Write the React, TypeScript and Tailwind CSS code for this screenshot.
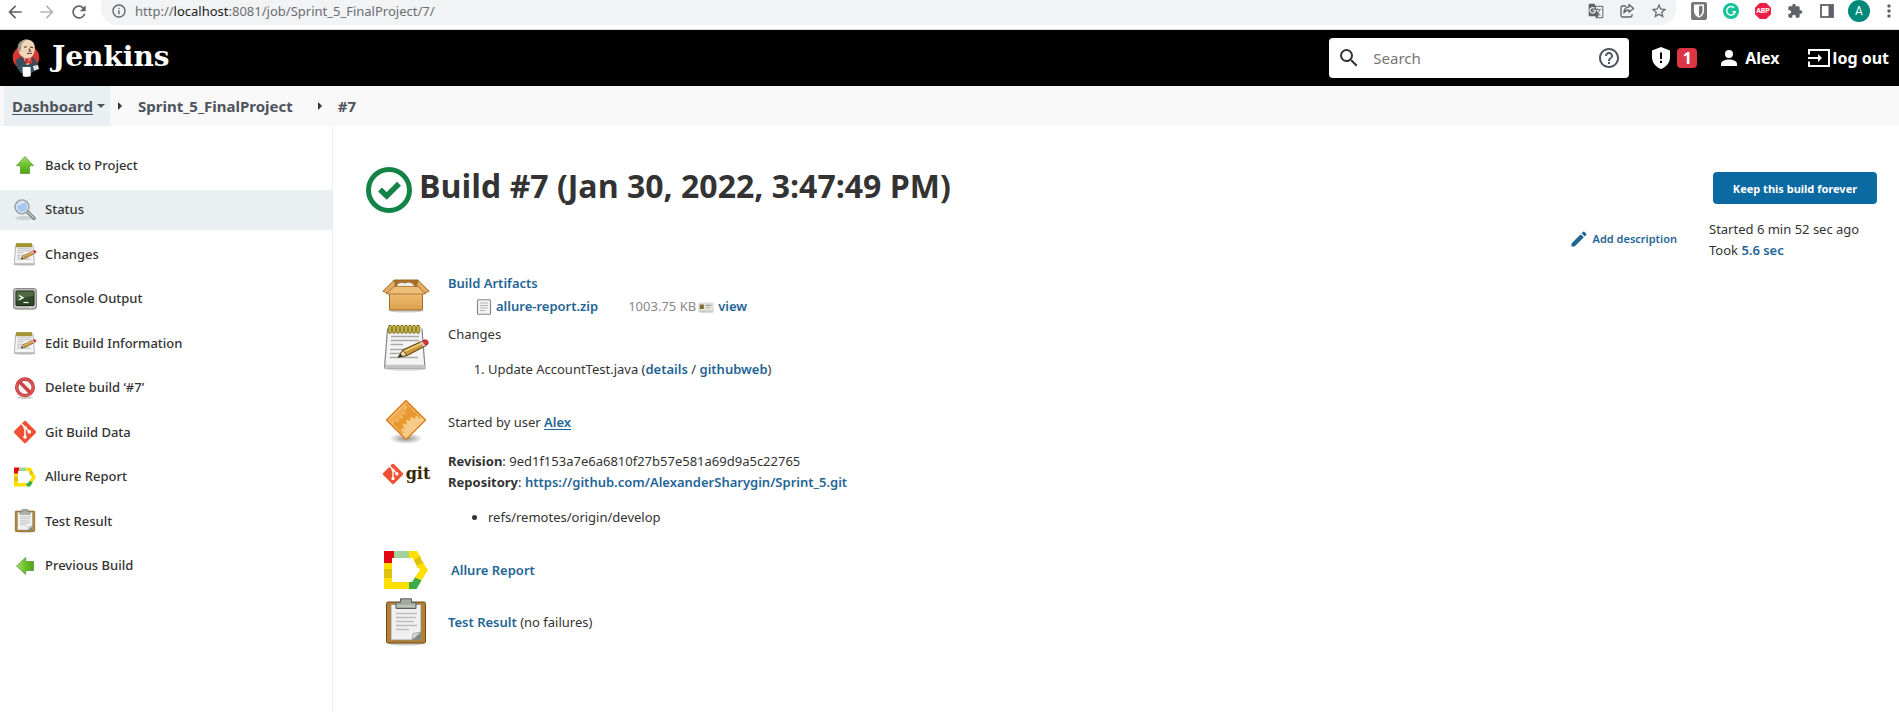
import type { ReactNode } from "react";
import {
  MdArrowBack,
  MdArrowForward,
  MdRefresh,
  MdInfoOutline,
  MdStarBorder,
  MdExtension,
  MdMoreVert,
  MdSearch,
  MdHelpOutline,
  MdEdit,
  MdGTranslate,
} from "react-icons/md";

type IconProps = { className?: string };

/* ---------- browser toolbar icons ---------- */

function ShareIcon() {
  return (
    <svg viewBox="0 0 16 16" className="size-4" fill="none" stroke="#5f6368" strokeWidth="1.3" strokeLinejoin="round" aria-hidden>
      <path d="M7 3H3.400C2.500 3 2 3.500 2 4.400V12.600C2 13.500 2.500 14 3.400 14H11.600C12.500 14 13 13.500 13 12.600V11" />
      <path d="M10 1.500 14.600 5.400 10 9.300V7C7.500 7 6 8 4.800 10 5 6.500 7 4.200 10 3.900Z" />
    </svg>
  );
}

function ShieldBoxIcon() {
  return (
    <svg viewBox="0 0 16 18" className="h-[18px] w-4" aria-hidden>
      <rect width="16" height="18" rx="2" fill="#777" />
      <path d="M3 2.500H13V9C13 12.500 10.500 14.500 8 15.800 5.500 14.500 3 12.500 3 9Z" fill="#fff" />
      <path d="M8 4H11.500V9C11.500 11.500 10 13 8 14.200Z" fill="#777" />
    </svg>
  );
}

function GrammarIcon() {
  return (
    <svg viewBox="0 0 16 16" className="size-4" fill="none" aria-hidden>
      <circle cx="8" cy="8" r="8" fill="#15c39a" />
      <path d="M11 4.700A4.300 4.300 0 1 0 12.200 8.800H9.500M12.200 8.500 10.700 11" stroke="#fff" strokeWidth="1.400" />
    </svg>
  );
}

function AbpIcon() {
  return (
    <span className="flex size-4 items-center justify-center bg-[#ed1e45] font-['Roboto',sans-serif] text-[7px] font-bold text-white [clip-path:polygon(30%_0,70%_0,100%_30%,100%_70%,70%_100%,30%_100%,0_70%,0_30%)]">
      ABP
    </span>
  );
}

function PanelIcon() {
  return (
    <svg viewBox="0 0 14 14" className="size-3.5" aria-hidden>
      <rect x="1" y="1" width="12" height="12" fill="none" stroke="#5f6368" strokeWidth="1.800" />
      <rect x="8.500" y="1" width="4.500" height="12" fill="#5f6368" />
    </svg>
  );
}

/* ---------- Jenkins header icons ---------- */

function Butler() {
  return (
    <svg viewBox="0 0 28 38" className="h-[38px] w-7" aria-hidden>
      <ellipse cx="14" cy="18.500" rx="13.300" ry="12.500" fill="#d33833" />
      <path d="M6 10C5 5 9 .8 14.500 .5 20 .4 23 4 22.800 9 22.800 15 20 19.500 15 19.500 10 19 6.500 15 6 10Z" fill="#f0d6b7" />
      <path d="M6 10C5 5 9 .8 14.500 .5 11 3 9 4.500 9.200 8.500L8.600 12 7.500 13Z" fill="#9c958c" />
      <path d="M12 8.300 15 7.800M18 8 21 8.600M15 14.500 20 14.200M17 9.500 18.500 12 16.500 12.300" stroke="#513a2f" strokeWidth="1.100" fill="none" />
      <path d="M4 21 9 17.500 15 24 21 18 26 25V30L18 35 9 34 5 29Z" fill="#335061" />
      <path d="M12 19 15.500 22.500 19 19 17 25.500H13.500Z" fill="#fff" />
      <path d="M13 20.500 16.500 22.300 20.500 20V25.500L16.500 23.800 13 25.500Z" fill="#d33833" stroke="#81201d" strokeWidth=".5" />
      <path d="M10.500 28H18.500L18.800 37.200 14 38 10.800 37.300Z" fill="#fff" />
      <path d="M21 27 26 26 27 30 22 31.500Z" fill="#e9e4df" />
    </svg>
  );
}

function ShieldAlert() {
  return (
    <svg viewBox="0 0 18 22" className="h-[22px] w-[18px]" aria-hidden>
      <path d="M9 0 18 3.500V10C18 15.500 14.500 20 9 22 3.500 20 0 15.500 0 10V3.500Z" fill="#fff" />
      <path d="M9 5.500V12M9 13.800V16" stroke="#000" strokeWidth="2" />
    </svg>
  );
}

function PersonIcon() {
  return (
    <svg viewBox="0 0 16 16" className="size-4" fill="#fff" aria-hidden>
      <circle cx="8" cy="4" r="4" />
      <path d="M8 9.500C12 9.500 16 11.200 16 14V16H0V14C0 11.200 4 9.500 8 9.500Z" />
    </svg>
  );
}

function LogoutIcon() {
  return (
    <svg viewBox="0 0 22 18" className="h-[18px] w-[22px]" fill="none" stroke="#fff" strokeWidth="2" aria-hidden>
      <path d="M1 5.500V1H21V17H1V12.500" />
      <path d="M0 9H12" />
      <path d="M10 5 14 9 10 13Z" fill="#fff" stroke="none" />
    </svg>
  );
}

/* ---------- task and summary icons ---------- */

function ArrowIcon({ className }: IconProps) {
  return (
    <svg viewBox="0 0 24 24" className={className} aria-hidden>
      <defs>
        <linearGradient id="leaf" x1="0" y1="0" x2="0" y2="1">
          <stop offset="0" stopColor="#a5d977" />
          <stop offset=".5" stopColor="#6cc228" />
          <stop offset="1" stopColor="#4fa316" />
        </linearGradient>
      </defs>
      <path d="M12 3.500 20.500 12.700H16.500V20.500H7.500V12.700H3.500Z" fill="url(#leaf)" stroke="#5a9a32" strokeWidth=".8" strokeLinejoin="round" />
    </svg>
  );
}

function MagnifierIcon() {
  return (
    <svg viewBox="0 0 24 24" className="size-6" aria-hidden>
      <ellipse cx="11" cy="20" rx="9" ry="2" fill="#000" opacity=".12" />
      <path d="M14.500 14 21 20.300" stroke="#76787a" strokeWidth="3.600" strokeLinecap="round" />
      <path d="M14.500 14 21 20" stroke="#c5c7c9" strokeWidth="1.600" strokeLinecap="round" />
      <circle cx="9" cy="8.800" r="6.900" fill="#a9c6ee" stroke="#9a9da2" strokeWidth="1.500" />
      <circle cx="9" cy="8.800" r="5.700" fill="none" stroke="#e6eefa" strokeWidth="1" />
      <path d="M4.500 8.500A4.500 4.500 0 0 1 12 5C9.500 5 7 6.500 4.500 8.500Z" fill="#dce9fb" />
    </svg>
  );
}

function NotepadIcon({ className }: IconProps) {
  return (
    <svg viewBox="0 0 48 48" className={className} aria-hidden>
      <ellipse cx="24" cy="46" rx="20" ry="1.800" fill="#000" opacity=".15" />
      <path d="M5.500 6H40L43 45H2.500Z" fill="#f4f4f4" stroke="#838680" strokeWidth="1.200" />
      <path d="M2.900 41.800H42.700L43 45H2.500Z" fill="#c3c4c1" />
      <path d="M9 13.500H37M8.700 17.500H37M8.500 21.500H21M8.200 26.500H35M8 30.500H29M7.800 34.500H36" stroke="#a7a9a7" strokeWidth="1.400" />
      <path d="M6.500 6.500H39.500" stroke="#d9d9d2" strokeWidth="5" />
      <path d="M8 3.500V9M12 3.500V9M16 3.500V9M20 3.500V9M24 3.500V9M28 3.500V9M32 3.500V9M36 3.500V9" stroke="#6b5e0a" strokeWidth="3.400" strokeLinecap="round" />
      <path d="M8 3.500V9M12 3.500V9M16 3.500V9M20 3.500V9M24 3.500V9M28 3.500V9M32 3.500V9M36 3.500V9" stroke="#e0cb3c" strokeWidth="1.600" strokeLinecap="round" />
      <path d="M16.500 34 21 27 39.500 18.500 43 23 25 32.500Z" fill="#c99a3c" stroke="#6d4a14" strokeWidth="1.100" />
      <path d="M22 28.500 40.500 20" stroke="#f0cf86" strokeWidth="1.500" />
      <path d="M16.500 34 21 27 25 32.500Z" fill="#efd9b2" stroke="#6d4a14" />
      <path d="M16.500 34 18.500 30.700 20.500 33.400Z" fill="#222" />
      <path d="M39.500 18.500 42.500 17C45 16 47.500 19.500 45.500 21.500L43 23Z" fill="#d8322f" stroke="#9b1f1f" strokeWidth=".8" />
      <path d="M38 19.200 40 18.300 43.500 22.700 41.500 23.800Z" fill="#c8cbcc" />
    </svg>
  );
}

function ConsoleIcon() {
  return (
    <svg viewBox="0 0 24 24" className="size-6" aria-hidden>
      <rect x=".6" y="1.600" width="22.800" height="20.500" rx="2.200" fill="#bfc0bd" stroke="#80827e" />
      <rect x="3" y="4" width="18" height="14.500" rx=".8" fill="#2f4a28" stroke="#1a2418" />
      <path d="M3.500 4.500H20.500V9C15 9.500 9 11 3.500 14Z" fill="#4f6b45" />
      <path d="M6 8.500 10 10.700 6 13" fill="none" stroke="#fff" strokeWidth="1.400" />
      <path d="M10.500 15.500H15.500" stroke="#fff" strokeWidth="1.200" />
      <circle cx="17.500" cy="20.300" r=".8" fill="#fff" />
    </svg>
  );
}

function ForbiddenIcon() {
  return (
    <svg viewBox="0 0 24 24" className="size-6" aria-hidden>
      <ellipse cx="12" cy="21.500" rx="8" ry="1.500" fill="#000" opacity=".2" />
      <circle cx="12" cy="11.300" r="8.300" fill="#f8f1f1" stroke="#b92a2a" strokeWidth="3.400" />
      <path d="M6.300 5.600 17.700 17" stroke="#b92a2a" strokeWidth="3.200" />
      <circle cx="12" cy="11.300" r="8.300" fill="none" stroke="#da5656" strokeWidth="2.200" />
      <path d="M6.300 5.600 17.700 17" stroke="#d44444" strokeWidth="2.200" />
    </svg>
  );
}

function GitIcon({ className }: IconProps) {
  return (
    <svg viewBox="0 0 24 24" className={className} aria-hidden>
      <rect x="3.700" y="3.700" width="16.600" height="16.600" rx="1.500" transform="rotate(45 12 12)" fill="#f05033" />
      <path d="M8.300 3.500 12 7.200V17M12 7.200 16.200 11.600" stroke="#fff" strokeWidth="1.500" fill="none" />
      <circle cx="12" cy="7.600" r="1.700" fill="#fff" />
      <circle cx="12" cy="17" r="1.800" fill="#fff" />
      <circle cx="16.300" cy="11.900" r="1.800" fill="#fff" />
    </svg>
  );
}

function AllureIcon({ className }: IconProps) {
  return (
    <svg viewBox="0 0 44 38" className={className} aria-hidden>
      <path d="M0 12H8V18H0Z" fill="#ffdf00" />
      <path d="M0 18H8V27H0Z" fill="#dfc20f" />
      <path d="M0 27H8V31H25V38H0Z" fill="#ffdf00" />
      <path d="M0 0H10V7H8V12H0Z" fill="#e30613" />
      <path d="M10 0H25V7H10Z" fill="#a3d39c" />
      <path d="M25 0H33L37 7 31 11 28.500 7H25Z" fill="#ffdf00" />
      <path d="M35.500 5 40 13 33.500 17 30 9.500Z" fill="#dfc20f" />
      <path d="M39 11.500 44 19 37 30 30.500 27 36 19 32.500 14.500Z" fill="#ffdf00" />
      <path d="M37.500 29.500 32.500 38H25V31H28L31 26.500Z" fill="#3cab49" />
    </svg>
  );
}

function ClipboardIcon({ className }: IconProps) {
  return (
    <svg viewBox="0 0 48 48" className={className} aria-hidden>
      <ellipse cx="24" cy="45.500" rx="18" ry="2" fill="#000" opacity=".2" />
      <rect x="4.500" y="4" width="39" height="41" rx="1.500" fill="#b5802f" stroke="#6e4c12" />
      <path d="M9 6.500H39V42H9Z" fill="#f0f0f0" stroke="#8d8f8c" strokeWidth=".8" />
      <path d="M39 34V42H30Z" fill="#868884" />
      <path d="M30 42 31 35.500 39 34Z" fill="#dcdedb" stroke="#8d8f8c" strokeWidth=".7" />
      <path d="M14 15.500H35M14 19.500H34M14 23.500H32M14 27.500H35M14 31.500H27" stroke="#bcbdbb" strokeWidth="1.700" />
      <path d="M18.500 4.500V.8H29.500V4.500H34V10.500H14V4.500Z" fill="#a3aaa2" stroke="#5a5e58" strokeWidth="1" />
      <path d="M15 8H33" stroke="#c7ccc5" strokeWidth="1.500" />
    </svg>
  );
}

function PackageIcon() {
  return (
    <svg viewBox="0 0 48 48" className="size-12" aria-hidden>
      <defs>
        <linearGradient id="carton" x1="0" y1="0" x2="0" y2="1">
          <stop offset="0" stopColor="#f0c078" />
          <stop offset="1" stopColor="#dda04c" />
        </linearGradient>
      </defs>
      <ellipse cx="24" cy="39.500" rx="18" ry="2" fill="#000" opacity=".2" />
      <path d="M12 9H36L40 21H8Z" fill="#a8702a" stroke="#9c6a28" />
      <path d="M15 15C16 11 21 11.500 23 12.500 26 10.500 31 11.500 32 15L33 17H14Z" fill="#ececec" />
      <rect x="7.500" y="20" width="33" height="19" rx="1" fill="url(#carton)" stroke="#a06c27" />
      <path d="M8 15.500 4.500 23H43.500L40 15.500Z" fill="#eebe78" stroke="#a06c27" strokeWidth=".8" />
      <path d="M12 9.200 .8 20.300 5.500 22 13.500 14ZM36 9.200 47.200 20.300 42.500 22 34.500 14Z" fill="#e3ac60" stroke="#9c6a28" strokeWidth=".9" />
    </svg>
  );
}

function GearDiamondIcon() {
  return (
    <svg viewBox="0 0 48 48" className="size-12" aria-hidden>
      <defs>
        <clipPath id="diamond">
          <path d="M24 2.500 43.500 22 24 41.500 4.500 22Z" />
        </clipPath>
        <radialGradient id="shade">
          <stop offset="0" stopColor="#000" stopOpacity=".45" />
          <stop offset="1" stopColor="#000" stopOpacity="0" />
        </radialGradient>
      </defs>
      <ellipse cx="24" cy="40.500" rx="17" ry="5.500" fill="url(#shade)" />
      <g clipPath="url(#diamond)">
        <rect width="48" height="48" fill="#e8982f" />
        <circle cx="8" cy="9" r="15" fill="#f0ac52" />
        <circle cx="8" cy="9" r="15.500" fill="none" stroke="#f3b766" strokeWidth="3" strokeDasharray="2.500 2.500" />
        <circle cx="36" cy="35" r="15" fill="#f8ca88" />
        <circle cx="36" cy="35" r="15.500" fill="none" stroke="#f8ca88" strokeWidth="3" strokeDasharray="2.500 2.500" />
      </g>
      <path d="M24 2.500 43.500 22 24 41.500 4.500 22Z" fill="none" stroke="#dd7f1c" strokeWidth="1.400" strokeLinejoin="round" />
      <path d="M24 4.600 41.400 22 24 39.400 6.600 22Z" fill="none" stroke="#f8cf95" strokeWidth=".8" />
    </svg>
  );
}

function DocumentIcon() {
  return (
    <svg viewBox="0 0 16 16" className="size-4" aria-hidden>
      <rect x="1.500" y=".8" width="13" height="14.400" rx="1" fill="#f4f4f4" stroke="#858585" strokeWidth="1.100" />
      <path d="M4 4H12M4 6.500H12M4 9H12M4 11.500H9" stroke="#b5b5b5" strokeWidth="1" />
    </svg>
  );
}

function FingerprintCardIcon() {
  return (
    <svg viewBox="0 0 16 16" className="size-4" aria-hidden>
      <rect x=".8" y="4" width="14.400" height="9" rx=".8" fill="#e5e6e2" stroke="#d2d3cf" strokeWidth=".8" />
      <rect x="1.800" y="5.500" width="4" height="4.500" fill="#7c6a35" />
      <path d="M7.500 6.300H13.500" stroke="#8c8c8c" />
      <path d="M7.500 8.800H12" stroke="#c4b97c" />
      <rect x="1" y="11.500" width="14" height="2" fill="#c9cac6" />
    </svg>
  );
}

function SuccessIcon() {
  return (
    <svg viewBox="0 0 46 46" className="size-[46px]" fill="none" stroke="#138347" aria-hidden>
      <circle cx="23" cy="23" r="20.500" strokeWidth="5" />
      <path d="M14 22.500 20.700 29 33 16.800" strokeWidth="5.500" />
    </svg>
  );
}

/* ---------- page ---------- */

function BrowserBar() {
  return (
    <div className="flex h-[30px] items-start border-b border-[#dadce0] bg-white text-[#5f6368]">
      <div className="flex h-[23px] w-[101px] shrink-0 items-center gap-3 pl-[5px]">
        <button aria-label="Back"><MdArrowBack className="size-5" /></button>
        <button aria-label="Forward" className="text-[#b4b6b8]"><MdArrowForward className="size-5" /></button>
        <button aria-label="Reload"><MdRefresh className="size-5" /></button>
      </div>
      <div className="flex h-[25px] flex-1 items-center rounded-b-2xl bg-[#f1f3f4] pr-2 pb-[3px] pl-2.5">
        <MdInfoOutline className="size-4 shrink-0" />
        <p className="flex-1 pl-2 text-[#6a6e73]">
          http://<span className="text-[#202124]">localhost</span>:8081/job/Sprint_5_FinalProject/7/
        </p>
        <div className="flex items-center gap-[15px]">
          <button aria-label="Translate"><MdGTranslate className="size-4" /></button>
          <button aria-label="Share"><ShareIcon /></button>
          <button aria-label="Bookmark"><MdStarBorder className="size-[18px]" /></button>
        </div>
      </div>
      <div className="flex h-[22px] items-center pl-[7px]">
        <button aria-label="Password manager" className="flex w-8 justify-center"><ShieldBoxIcon /></button>
        <button aria-label="Writing assistant" className="flex w-8 justify-center"><GrammarIcon /></button>
        <button className="flex w-8 justify-center"><AbpIcon /></button>
        <button aria-label="Extensions" className="flex w-8 justify-center"><MdExtension className="size-4" /></button>
        <button aria-label="Side panel" className="flex w-8 justify-center"><PanelIcon /></button>
        <button className="flex w-8 justify-center">
          <span className="flex size-[22px] items-center justify-center rounded-full bg-[#00897b] font-['Roboto',sans-serif] text-[12px] text-white">A</span>
        </button>
        <button aria-label="Menu" className="flex w-6 justify-center pl-1"><MdMoreVert className="size-5" /></button>
      </div>
    </div>
  );
}

function Header() {
  return (
    <header className="flex h-14 items-center bg-black pr-2.5 pl-3 text-[16px] font-bold text-white">
      <a href="#" className="flex items-center gap-3">
        <Butler />
        <span className="pb-0.5 font-['DejaVu_Serif',serif] text-[28px] leading-8">Jenkins</span>
      </a>
      <label className="ml-auto flex h-10 w-[300px] items-center rounded bg-white px-2 text-[#333]">
        <MdSearch className="size-6 shrink-0" />
        <input
          aria-label="Search"
          placeholder="Search"
          className="ml-3 w-full min-w-0 text-[15px] font-normal outline-none placeholder:text-[#757575]"
        />
        <MdHelpOutline className="size-6 shrink-0 text-[#4d545d]" />
      </label>
      <a href="#" className="ml-[23px] flex items-center gap-[7px]">
        <ShieldAlert />
        <span className="flex size-5 items-center justify-center rounded bg-[#dc3545]">1</span>
      </a>
      <a href="#" className="ml-6 flex items-center gap-2">
        <PersonIcon />
        Alex
      </a>
      <a href="#" className="ml-7 flex items-center gap-[3px]">
        <LogoutIcon />
        log out
      </a>
    </header>
  );
}

function Breadcrumbs() {
  return (
    <nav className="flex h-10 items-center bg-[#f8f8f8] pl-1 text-[15px] font-bold text-[#4d545d]">
      <a href="#" className="flex h-full items-center gap-1 bg-[#eaeff2] px-[5px] pl-2">
        <span className="underline underline-offset-2">Dashboard</span>
        <span className="size-0 border-x-4 border-t-4 border-x-transparent border-t-[#4d545d]" />
      </a>
      <span className="ml-2 size-0 border-y-4 border-l-4 border-y-transparent border-l-[#333]" />
      <a href="#" className="ml-4">Sprint_5_FinalProject</a>
      <span className="ml-[25px] size-0 border-y-4 border-l-4 border-y-transparent border-l-[#333]" />
      <a href="#" className="ml-4">#7</a>
    </nav>
  );
}

const tasks: { label: string; icon: ReactNode; active?: boolean }[] = [
  { label: "Back to Project", icon: <ArrowIcon className="size-6" /> },
  { label: "Status", icon: <MagnifierIcon />, active: true },
  { label: "Changes", icon: <NotepadIcon className="size-6" /> },
  { label: "Console Output", icon: <ConsoleIcon /> },
  { label: "Edit Build Information", icon: <NotepadIcon className="size-6" /> },
  { label: "Delete build ‘#7’", icon: <ForbiddenIcon /> },
  { label: "Git Build Data", icon: <GitIcon className="size-6" /> },
  { label: "Allure Report", icon: <AllureIcon className="h-5 w-[22px]" /> },
  { label: "Test Result", icon: <ClipboardIcon className="size-6" /> },
  { label: "Previous Build", icon: <ArrowIcon className="size-6 -rotate-90" /> },
];

function SidePanel() {
  return (
    <aside className="w-[333px] shrink-0 border-r border-[#eaeff2] pt-[19px]">
      <ul className="flex h-[441px] flex-col justify-between">
        {tasks.map((task) => (
          <li key={task.label}>
            <a
              href="#"
              className={`flex h-10 items-center gap-2 pl-[13px] font-medium ${task.active ? "bg-[#eaeff2]" : ""}`}
            >
              <span className="flex size-6 items-center justify-center">{task.icon}</span>
              {task.label}
            </a>
          </li>
        ))}
      </ul>
    </aside>
  );
}

function Link({ children, className = "" }: { children: ReactNode; className?: string }) {
  return (
    <a href="#" className={`font-semibold text-[#1f6596] ${className}`}>
      {children}
    </a>
  );
}

function SummaryRow({ icon, children, className = "" }: { icon: ReactNode; children: ReactNode; className?: string }) {
  return (
    <tr>
      <td className="w-[66px] p-0 py-0.5 align-top">
        <span className="flex size-12 items-center justify-center">{icon}</span>
      </td>
      <td className={`p-0 pt-[3px] pb-0.5 ${className}`}>{children}</td>
    </tr>
  );
}

function Summary() {
  return (
    <table className="mt-14 ml-4 border-collapse">
      <tbody>
        <SummaryRow icon={<PackageIcon />} className="align-top">
          <Link className="block leading-[23px]">Build Artifacts</Link>
          <div className="flex h-[23px] items-center pl-7">
            <DocumentIcon />
            <Link className="ml-1">allure-report.zip</Link>
            <span className="ml-[30px] text-[#888]">1003.75 KB</span>
            <span className="mx-0.5"><FingerprintCardIcon /></span>
            <Link className="ml-0.5">view</Link>
          </div>
        </SummaryRow>
        <SummaryRow icon={<NotepadIcon className="size-12" />} className="align-top">
          Changes
          <ol className="my-3.5 list-decimal pl-10">
            <li>
              Update AccountTest.java (<Link>details</Link> / <Link>githubweb</Link>)
            </li>
          </ol>
        </SummaryRow>
        <SummaryRow icon={<GearDiamondIcon />}>
          Started by user <Link className="underline underline-offset-2">Alex</Link>
        </SummaryRow>
        <SummaryRow
          icon={
            <span className="flex items-center gap-0.5 font-['DejaVu_Serif',serif] text-[16px] leading-5 font-bold text-[#362701]">
              <GitIcon className="size-[22px]" />
              git
            </span>
          }
          className="align-top"
        >
          <p><strong>Revision</strong>: 9ed1f153a7e6a6810f27b57e581a69d9a5c22765</p>
          <p><strong>Repository</strong>: <Link>https://github.com/AlexanderSharygin/Sprint_5.git</Link></p>
          <ul className="my-3.5 list-disc pl-10">
            <li>refs/remotes/origin/develop</li>
          </ul>
        </SummaryRow>
        <SummaryRow icon={<AllureIcon className="h-[38px] w-11" />}>
          <Link className="pl-[3px]">Allure Report</Link>
        </SummaryRow>
        <SummaryRow icon={<ClipboardIcon className="size-12" />}>
          <Link>Test Result</Link> (no failures)
        </SummaryRow>
      </tbody>
    </table>
  );
}

export default function App() {
  return (
    <div className="min-h-screen bg-white font-['Noto_Sans','Open_Sans',sans-serif] text-[13px] leading-[21px] text-[#333]">
      <BrowserBar />
      <Header />
      <Breadcrumbs />
      <div className="flex min-h-[586px]">
        <SidePanel />
        <main className="flex flex-1 pt-[41px] pr-[22px] pl-[33px]">
          <div className="flex-1">
            <h1 className="flex h-[46px] items-center gap-[7px] font-['Open_Sans',sans-serif] text-[32px] leading-10 font-bold">
              <SuccessIcon />
              <span className="pb-2">Build #7 (Jan 30, 2022, 3:47:49 PM)</span>
            </h1>
            <Summary />
          </div>
          <Link className="mr-8 flex items-center gap-1 self-start pt-[61px] text-[11px]">
            <MdEdit className="size-5" />
            Add description
          </Link>
          <div className="w-[168px] pt-[5px]">
            <button className="ml-1 h-8 w-[164px] rounded bg-[#0b6aa2] text-[11px] font-bold text-white">
              Keep this build forever
            </button>
            <p className="mt-[15px]">Started 6 min 52 sec ago</p>
            <p>Took <Link>5.6 sec</Link></p>
          </div>
        </main>
      </div>
    </div>
  );
}
